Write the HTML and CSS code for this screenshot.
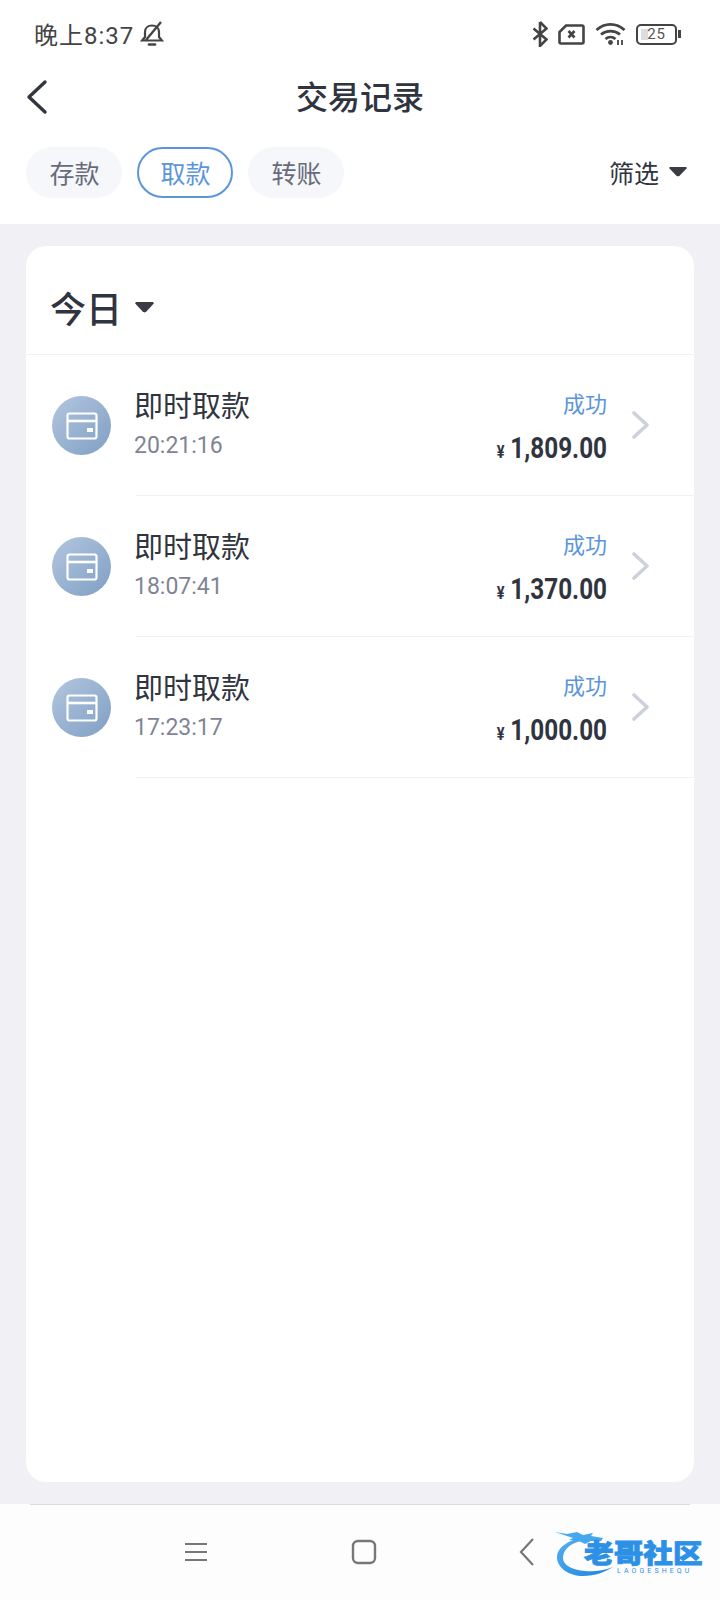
FILE: index.html
```html
<!DOCTYPE html>
<html lang="zh-CN">
<head>
<meta charset="UTF-8">
<meta name="viewport" content="width=device-width, initial-scale=1.0">
<title>交易记录</title>
<link rel="stylesheet" href="styles.css">
</head>
<body>

<div class="status-bar">
    <div class="status-left">
        <span class="status-time">晚上8:37</span>
        <svg class="bell" width="24" height="26" viewBox="0 0 24 26" fill="none" stroke="#444" stroke-width="2.200">
            <path d="M2 19.500h20l-3-3.500V11c0-4-3-6.500-7-6.500S5 7 5 11v5z"/>
            <path d="M9 23.500h6" stroke-linecap="round" stroke-width="2.600"/>
            <path d="M21 1L6 19" stroke-width="2.400"/>
        </svg>
    </div>
    <div class="status-right">
        <svg width="16" height="26" viewBox="0 0 16 26" fill="none" stroke="#444" stroke-width="2.600">
            <path d="M8 1v24l6.500-6.500L1.500 7.500M8 1l6.500 6.500L1.500 18.500"/>
        </svg>
        <svg width="27" height="21" viewBox="0 0 27 21" fill="none" stroke="#444" stroke-width="2.600">
            <path d="M8 1.500h16a1.500 1.500 0 0 1 1.500 1.500v15a1.500 1.500 0 0 1-1.500 1.500H3A1.500 1.500 0 0 1 1.500 18V8z"/>
            <path d="M10.500 7l6 6.500M16.500 7l-6 6.500"/>
        </svg>
        <svg width="31" height="24" viewBox="0 0 31 24" fill="none" stroke="#444" stroke-width="2.800">
            <path d="M1.500 8c8-7.500 20-7.500 28 0M6 12.500c5.500-4.500 13.500-4.500 19 0M10.500 17c3-2.500 7-2.500 10 0"/>
            <circle cx="15.500" cy="20.500" r="2.400" fill="#444" stroke="none"/>
            <path d="M23 18v5M27 18v5" stroke-width="1.800"/>
        </svg>
        <div class="battery">
            <div class="battery-body"><span class="battery-level"></span><span class="battery-num">25</span></div>
            <span class="battery-nub"></span>
        </div>
    </div>
</div>

<div class="nav-bar">
    <svg class="back" width="22" height="36" viewBox="0 0 22 36" fill="none" stroke="#33363f" stroke-width="3.400" stroke-linecap="round" stroke-linejoin="round">
        <path d="M19 3L3 18l16 15"/>
    </svg>
    <div class="nav-title">交易记录</div>
</div>

<div class="tabs">
    <div class="tab">存款</div>
    <div class="tab tab-active">取款</div>
    <div class="tab">转账</div>
    <div class="filter">筛选<span class="arrow"></span></div>
</div>

<div class="main">
    <div class="card">
        <div class="card-head">今日<span class="arrow arrow-big"></span></div>

        <div class="row">
            <div class="row-icon">
                <svg width="32" height="28" viewBox="0 0 32 28" fill="none" stroke="#fff" stroke-width="2.200">
                    <rect x="1.500" y="1.500" width="29" height="25" rx="2"/>
                    <path d="M1.500 9h29" stroke-width="2.600"/>
                    <rect x="21" y="16" width="6" height="4" fill="#fff" stroke="none"/>
                </svg>
            </div>
            <div class="row-body">
                <div class="row-main">
                    <div class="row-title">即时取款</div>
                    <div class="row-time">20:21:16</div>
                </div>
                <div class="row-side">
                    <div class="row-status">成功</div>
                    <div class="row-amount"><span class="yen">¥</span>1,809.00</div>
                </div>
                <svg class="chevron" width="18" height="28" viewBox="0 0 18 28" fill="none" stroke="#ccd1dc" stroke-width="3.600" stroke-linecap="round" stroke-linejoin="round">
                    <path d="M2 2l13 12L2 26"/>
                </svg>
            </div>
        </div>

        <div class="row">
            <div class="row-icon">
                <svg width="32" height="28" viewBox="0 0 32 28" fill="none" stroke="#fff" stroke-width="2.200">
                    <rect x="1.500" y="1.500" width="29" height="25" rx="2"/>
                    <path d="M1.500 9h29" stroke-width="2.600"/>
                    <rect x="21" y="16" width="6" height="4" fill="#fff" stroke="none"/>
                </svg>
            </div>
            <div class="row-body">
                <div class="row-main">
                    <div class="row-title">即时取款</div>
                    <div class="row-time">18:07:41</div>
                </div>
                <div class="row-side">
                    <div class="row-status">成功</div>
                    <div class="row-amount"><span class="yen">¥</span>1,370.00</div>
                </div>
                <svg class="chevron" width="18" height="28" viewBox="0 0 18 28" fill="none" stroke="#ccd1dc" stroke-width="3.600" stroke-linecap="round" stroke-linejoin="round">
                    <path d="M2 2l13 12L2 26"/>
                </svg>
            </div>
        </div>

        <div class="row">
            <div class="row-icon">
                <svg width="32" height="28" viewBox="0 0 32 28" fill="none" stroke="#fff" stroke-width="2.200">
                    <rect x="1.500" y="1.500" width="29" height="25" rx="2"/>
                    <path d="M1.500 9h29" stroke-width="2.600"/>
                    <rect x="21" y="16" width="6" height="4" fill="#fff" stroke="none"/>
                </svg>
            </div>
            <div class="row-body">
                <div class="row-main">
                    <div class="row-title">即时取款</div>
                    <div class="row-time">17:23:17</div>
                </div>
                <div class="row-side">
                    <div class="row-status">成功</div>
                    <div class="row-amount"><span class="yen">¥</span>1,000.00</div>
                </div>
                <svg class="chevron" width="18" height="28" viewBox="0 0 18 28" fill="none" stroke="#ccd1dc" stroke-width="3.600" stroke-linecap="round" stroke-linejoin="round">
                    <path d="M2 2l13 12L2 26"/>
                </svg>
            </div>
        </div>
    </div>
</div>

<div class="bottom-bar">
    <svg width="24" height="20" viewBox="0 0 24 20" fill="none" stroke="#777" stroke-width="2.200">
        <path d="M1 2h22M1 10h22M1 18h22"/>
    </svg>
    <svg width="26" height="26" viewBox="0 0 26 26" fill="none" stroke="#777" stroke-width="2.400">
        <rect x="2" y="2" width="22" height="22" rx="5"/>
    </svg>
    <svg width="16" height="30" viewBox="0 0 16 30" fill="none" stroke="#777" stroke-width="2.200">
        <path d="M14 2L2 15l12 13"/>
    </svg>
</div>

<div class="logo">
    <svg class="logo-mark" width="60" height="50" viewBox="0 0 60 50">
        <defs>
            <linearGradient id="logoBlue" x1="0" y1="0" x2="1" y2="1">
                <stop offset="0" stop-color="#55b0f2"/>
                <stop offset="1" stop-color="#1d86e0"/>
            </linearGradient>
        </defs>
        <path fill="url(#logoBlue)" d="M24 8C10 12 2 19 2 27c0 11 12 19 26 19 12 0 22-4 30-9-10 4-20 5-28 4C17 40 8 35 8 28c0-8 6-14 18-17z"/>
        <path fill="#45a8ef" d="M0 2l12 2 10-2 6 3 10-2-2 3 12 2-2 3H36l-6 3-6-3-10-1 4-2z"/>
    </svg>
    <div class="logo-name">老哥社区</div>
    <div class="logo-sub">LAOGESHEQU</div>
</div>

</body>
</html>
```

FILE: styles.css
```css
body {
    margin: 0;
    width: 720px;
    height: 1600px;
    display: flex;
    flex-direction: column;
    position: relative;
    overflow: hidden;
    background-color: #fff;
    color: #30343f;
    font-family: Roboto, "Noto Sans CJK SC", sans-serif;
}
.status-bar {
    height: 68px;
    padding: 0 39px 0 34px;
    box-sizing: border-box;
    display: flex;
    justify-content: space-between;
    align-items: center;
    color: #444;
    font-size: 24px;
}
.status-left {
    display: flex;
    align-items: center;
    gap: 6px;
}
.status-time {
    letter-spacing: 1px;
    padding-bottom: 2px;
}
.status-right {
    display: flex;
    align-items: center;
    gap: 10px;
}
.battery {
    display: flex;
    align-items: center;
    gap: 1px;
}
.battery-body {
    width: 41px;
    height: 21px;
    box-sizing: border-box;
    border: 2px solid #444;
    border-radius: 5px;
    position: relative;
    font-size: 15px;
    line-height: 17px;
    text-align: right;
    padding-right: 9px;
    letter-spacing: 1px;
    color: #555;
}
.battery-level {
    position: absolute;
    left: 3px;
    top: 3px;
    width: 7px;
    height: 11px;
    background-color: #ddd;
}
.battery-num {
    position: relative;
}
.battery-nub {
    width: 3px;
    height: 8px;
    background-color: #444;
}
.nav-bar {
    height: 58px;
    box-sizing: border-box;
    padding-bottom: 4px;
    display: flex;
    justify-content: center;
    align-items: center;
    position: relative;
}
.back {
    position: absolute;
    left: 26px;
    top: 11px;
}
.nav-title {
    font-size: 32px;
    font-weight: 500;
}
.tabs {
    display: flex;
    align-items: center;
    gap: 15px;
    padding: 21px 33px 26px 26px;
}
.tab {
    width: 96px;
    height: 51px;
    box-sizing: border-box;
    border-radius: 26px;
    background-color: #f6f7fa;
    color: #666b7b;
    font-size: 25px;
    padding: 0 0 2px 1px;
    display: flex;
    justify-content: center;
    align-items: center;
}
.tab-active {
    background-color: #fff;
    border: 2px solid #5b95dc;
    color: #5b95dc;
}
.filter {
    margin-left: auto;
    display: flex;
    align-items: center;
    font-size: 25px;
    padding-bottom: 2px;
}
.arrow {
    display: inline-block;
    margin-left: 10px;
    width: 18px;
    height: 10px;
    background-color: #3a3c44;
    clip-path: polygon(8% 0, 92% 0, 100% 15%, 60% 90%, 50% 100%, 40% 90%, 0 15%);
}
.arrow-big {
    margin-left: 13px;
    width: 19px;
    height: 11px;
}
.main {
    flex: 1;
    padding: 22px 26px;
    background-color: #f0f0f5;
    display: flex;
}
.card {
    flex: 1;
    background-color: #fff;
    border-radius: 20px;
}
.card-head {
    height: 109px;
    box-sizing: border-box;
    border-bottom: 1px solid #f1f1f4;
    padding: 14px 0 0 24px;
    display: flex;
    align-items: center;
    font-size: 36px;
    font-weight: 500;
}
.row {
    height: 141px;
    display: flex;
    align-items: center;
}
.row-icon {
    width: 59px;
    height: 59px;
    margin: 0 25px 0 26px;
    border-radius: 50%;
    background: linear-gradient(135deg, #b3c6de, #7f9fc4);
    display: flex;
    justify-content: center;
    align-items: center;
    flex-shrink: 0;
}
.row-body {
    flex: 1;
    height: 100%;
    box-sizing: border-box;
    border-bottom: 1px solid #f1f1f4;
    padding-right: 44px;
    display: flex;
    align-items: center;
}
.row-main {
    flex: 1;
    margin-left: -2px;
    padding-top: 2px;
}
.row-title {
    font-size: 29px;
    line-height: 40px;
}
.row-time {
    font-size: 23px;
    line-height: 38px;
    color: #7f8496;
}
.row-side {
    text-align: right;
    padding-top: 6px;
}
.row-status {
    font-size: 22px;
    line-height: 42px;
    color: #5b95dc;
    padding-bottom: 1px;
}
.row-amount {
    display: inline-block;
    font-weight: 700;
    font-size: 30px;
    line-height: 42px;
    white-space: nowrap;
    transform: scaleX(0.81);
    transform-origin: right center;
}
.yen {
    font-size: 18px;
    margin-right: 7px;
}
.chevron {
    margin-left: 25px;
}
.bottom-bar {
    height: 96px;
    box-sizing: border-box;
    background-color: #fdfdfd;
    padding: 0 185px 0 184px;
    display: flex;
    justify-content: space-between;
    align-items: center;
    position: relative;
}
.bottom-bar::before {
    content: "";
    position: absolute;
    left: 30px;
    right: 30px;
    top: 0;
    height: 1px;
    background-color: #dcdce0;
}
.logo {
    position: absolute;
    left: 555px;
    top: 1530px;
    width: 155px;
    height: 50px;
    color: #2b90e6;
}
.logo-mark {
    position: absolute;
    left: 0;
    top: 0;
}
.logo-name {
    position: absolute;
    left: 29px;
    top: 12px;
    font-size: 26px;
    line-height: 24px;
    font-weight: 900;
    white-space: nowrap;
    -webkit-text-stroke: 0.8px #2b90e6;
    transform: scaleX(1.14);
    transform-origin: left center;
}
.logo-sub {
    position: absolute;
    left: 62px;
    top: 37px;
    font-size: 7px;
    line-height: 8px;
    letter-spacing: 3.100px;
    white-space: nowrap;
}
```
